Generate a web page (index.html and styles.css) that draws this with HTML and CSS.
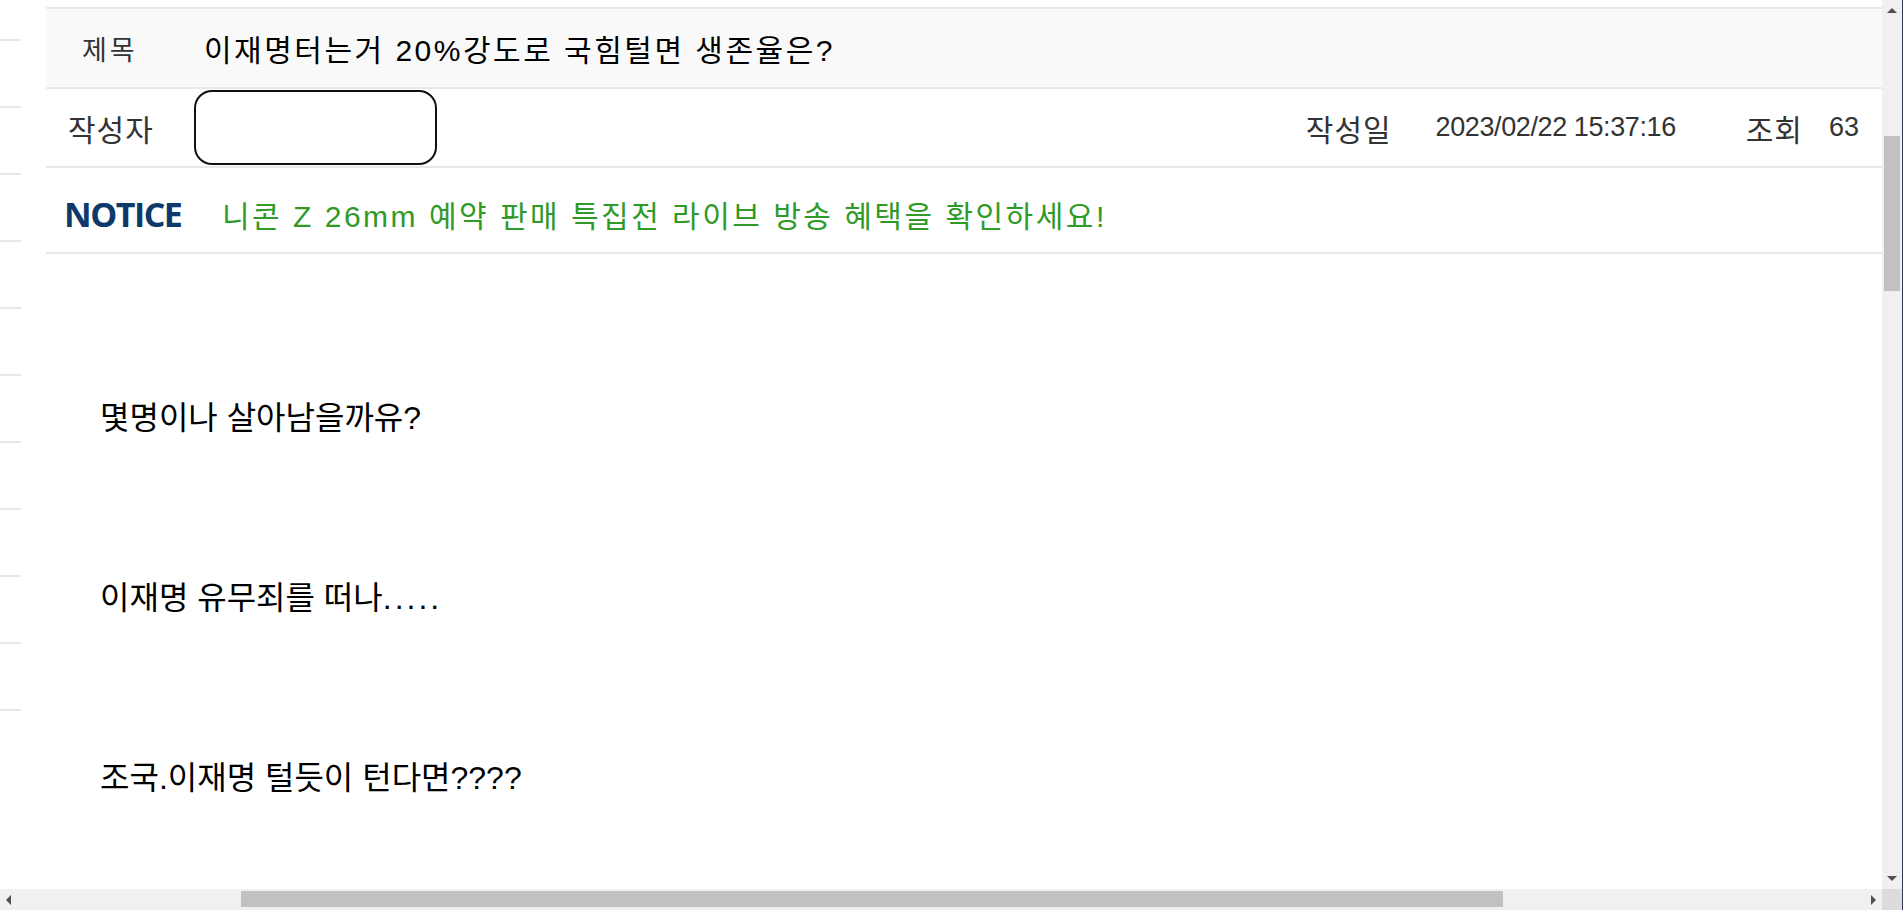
FILE: index.html
```html
<!DOCTYPE html>
<html lang="ko">
<head>
    <meta charset="UTF-8">
    <meta name="viewport" content="width=device-width, initial-scale=1.0">
    <title>게시글 보기</title>
    <link rel="stylesheet" href="styles.css">
</head>
<body>
    <div class="window">
        <div class="viewport">
            <!-- 왼쪽 목록 (잘려 보이는 부분) -->
            <ul class="side">
                <li class="side-item"></li>
                <li class="side-item"></li>
                <li class="side-item"></li>
                <li class="side-item"></li>
                <li class="side-item"></li>
                <li class="side-item"></li>
                <li class="side-item"></li>
                <li class="side-item"></li>
                <li class="side-item"></li>
                <li class="side-item"></li>
                <li class="side-item"></li>
            </ul>

            <div class="article">
                <div class="row row-title">
                    <span class="label label-title">제목</span>
                    <h2 class="subject">이재명터는거 20%강도로 국힘털면 생존율은?</h2>
                </div>
                <div class="row row-meta">
                    <span class="label label-writer">작성자</span>
                    <div class="writer-box"></div>
                    <div class="meta-right">
                        <span class="label">작성일</span>
                        <span class="meta-date">2023/02/22 15:37:16</span>
                        <span class="label meta-hit-label">조회</span>
                        <span class="meta-hit">63</span>
                    </div>
                </div>
                <div class="row row-notice">
                    <span class="notice-tag">NOTICE</span>
                    <a class="notice-link" href="#">니콘 Z 26mm 예약 판매 특집전 라이브 방송 혜택을 확인하세요!</a>
                </div>

                <div class="content">
                    <p>&nbsp;</p>
                    <p>&nbsp;</p>
                    <p>&nbsp;</p>
                    <p>몇명이나 살아남을까유?</p>
                    <p>&nbsp;</p>
                    <p>&nbsp;</p>
                    <p>&nbsp;</p>
                    <p>이재명 유무죄를 떠나<span class="dots">.....</span></p>
                    <p>&nbsp;</p>
                    <p>&nbsp;</p>
                    <p>&nbsp;</p>
                    <p>조국.이재명 털듯이 턴다면????</p>
                </div>
            </div>
        </div>

        <div class="vscroll">
            <div class="arrow arrow-up"></div>
            <div class="vtrack"><div class="vthumb"></div></div>
            <div class="arrow arrow-down"></div>
        </div>
        <div class="edge"></div>

        <div class="hscroll">
            <div class="arrow arrow-left"></div>
            <div class="htrack"><div class="hthumb"></div></div>
            <div class="arrow arrow-right"></div>
        </div>
        <div class="corner"></div>
    </div>
</body>
</html>
```

FILE: styles.css
```css
* {
    box-sizing: border-box;
}
html, body {
    margin: 0;
    height: 100%;
    overflow: hidden;
    background: #fff;
}
body {
    font-family: "Liberation Sans", "Noto Sans CJK KR", sans-serif;
    color: #000;
}

/* 창 + 스크롤바 */
.window {
    display: grid;
    grid-template-columns: 1882px 20px 1px;
    grid-template-rows: 889px 21px;
    height: 910px;
}
.viewport {
    display: flex;
    overflow: hidden;
}

/* 왼쪽 목록 */
.side {
    width: 21px;
    flex: none;
    list-style: none;
    margin: 0;
    padding: 0;
}
.side-item {
    height: 67px;
    border-bottom: 2px solid #e8e8e8;
}
.side-item:first-child {
    height: 41px;
}

/* 게시글 */
.article {
    flex: 1;
    margin-left: 25px;
    margin-top: 7px;
}
.row {
    display: flex;
    align-items: center;
    border-top: 2px solid #e8e8e8;
}
.label {
    font-size: 30px;
    letter-spacing: 1px;
    color: #333;
}
.row-title {
    height: 80px;
    background: #f9f9f9;
    padding-left: 36px;
}
.label-title {
    width: 122px;
    font-size: 27px;
    letter-spacing: 3px;
}
.subject {
    margin: 0;
    font-size: 30px;
    font-weight: normal;
    letter-spacing: 2.5px;
    color: #000;
}

.row-meta {
    height: 79px;
    padding-left: 22px;
}
.label-writer {
    width: 126px;
}
.writer-box {
    width: 243px;
    height: 75px;
    border: 2px solid #111;
    border-radius: 18px;
}
.meta-right {
    margin-left: auto;
    display: flex;
    align-items: center;
    padding-right: 23px;
    font-size: 27px;
    color: #333;
}
.meta-date {
    margin-left: 44px;
    letter-spacing: -0.4px;
}
.meta-hit-label {
    margin-left: 70px;
}
.meta-hit {
    margin-left: 26px;
}

.row-notice {
    height: 88px;
    padding-left: 18px;
    border-bottom: 2px solid #e8e8e8;
}
.notice-tag {
    width: 158px;
    font-family: "Open Sans", "Liberation Sans", sans-serif;
    font-weight: 700;
    font-size: 34px;
    letter-spacing: -1.5px;
    color: #0d3a6b;
    padding-top: 8px;
}
.notice-link {
    font-size: 30px;
    letter-spacing: 2.5px;
    color: #2f9a27;
    text-decoration: none;
    padding-top: 8px;
}

/* 본문 */
.content {
    padding: 7px 0 0 54px;
}
.content p {
    margin: 0;
    font-size: 32px;
    line-height: 45px;
}
.dots {
    letter-spacing: 3px;
}

/* 스크롤바 */
.vscroll {
    display: flex;
    flex-direction: column;
    align-items: center;
    background: #f0f0f0;
}
.vtrack {
    flex: 1;
    width: 100%;
    padding: 0 2px;
}
.vthumb {
    margin-top: 119px;
    height: 155px;
    background: #c1c1c1;
}
.hscroll {
    display: flex;
    align-items: center;
    background: #f0f0f0;
}
.htrack {
    flex: 1;
    height: 100%;
    padding: 2px 0 3px;
}
.hthumb {
    margin-left: 224px;
    width: 1262px;
    height: 100%;
    background: #c1c1c1;
}
.corner {
    background: #dcdcdc;
}
.edge {
    grid-row: 1 / 3;
    grid-column: 3;
    background: #2e3b52;
}
.arrow {
    flex: none;
    width: 0;
    height: 0;
    border: 5px solid transparent;
}
.arrow-up {
    margin: 8px 0 4px;
    border-bottom: 5px solid #505050;
    border-top-width: 0;
}
.arrow-down {
    margin: 4px 0 8px;
    border-top: 5px solid #505050;
    border-bottom-width: 0;
}
.arrow-left {
    margin: 0 6px 0 6px;
    border-right: 5px solid #505050;
    border-left-width: 0;
}
.arrow-right {
    margin: 0 6px 0 6px;
    border-left: 5px solid #505050;
    border-right-width: 0;
}
```
